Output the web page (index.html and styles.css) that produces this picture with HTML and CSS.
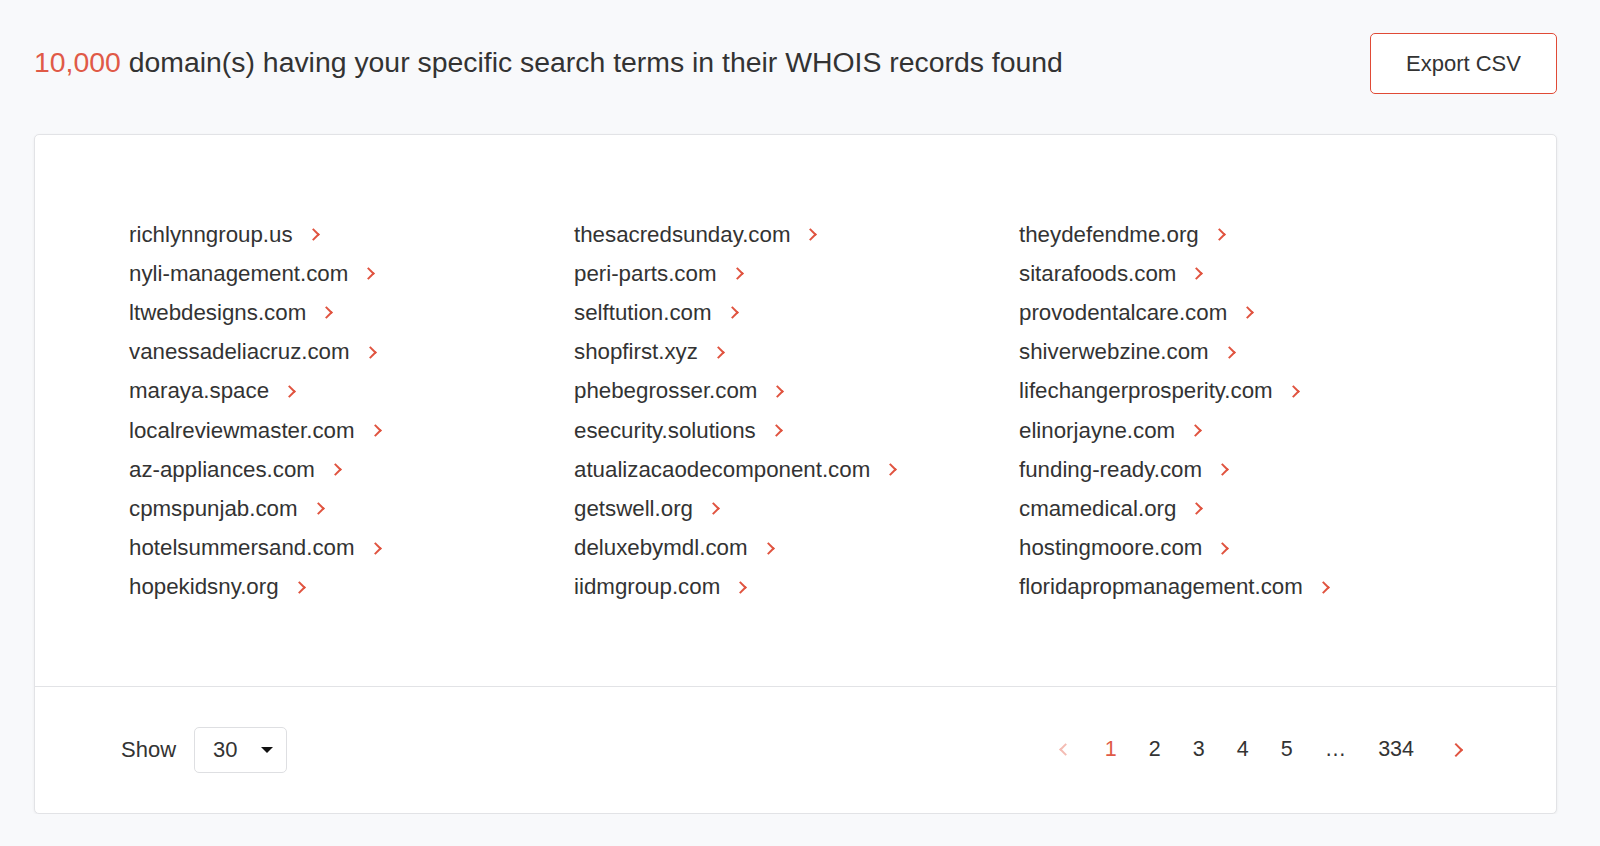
FILE: index.html
```html
<!DOCTYPE html>
<html lang="en">
<head>
<meta charset="utf-8">
<title>WHOIS search results</title>
<link rel="stylesheet" href="styles.css">
</head>
<body>
<div class="page">
  <header class="head">
    <h1 class="title"><span class="count">10,000</span> domain(s) having your specific search terms in their WHOIS records found</h1>
    <button class="export">Export CSV</button>
  </header>
  <section class="card">
    <div class="grid">
      <ul class="col">
        <li><a>richlynngroup.us</a><span class="chev"></span></li>
        <li><a>nyli-management.com</a><span class="chev"></span></li>
        <li><a>ltwebdesigns.com</a><span class="chev"></span></li>
        <li><a>vanessadeliacruz.com</a><span class="chev"></span></li>
        <li><a>maraya.space</a><span class="chev"></span></li>
        <li><a>localreviewmaster.com</a><span class="chev"></span></li>
        <li><a>az-appliances.com</a><span class="chev"></span></li>
        <li><a>cpmspunjab.com</a><span class="chev"></span></li>
        <li><a>hotelsummersand.com</a><span class="chev"></span></li>
        <li><a>hopekidsny.org</a><span class="chev"></span></li>
      </ul>
      <ul class="col">
        <li><a>thesacredsunday.com</a><span class="chev"></span></li>
        <li><a>peri-parts.com</a><span class="chev"></span></li>
        <li><a>selftution.com</a><span class="chev"></span></li>
        <li><a>shopfirst.xyz</a><span class="chev"></span></li>
        <li><a>phebegrosser.com</a><span class="chev"></span></li>
        <li><a>esecurity.solutions</a><span class="chev"></span></li>
        <li><a>atualizacaodecomponent.com</a><span class="chev"></span></li>
        <li><a>getswell.org</a><span class="chev"></span></li>
        <li><a>deluxebymdl.com</a><span class="chev"></span></li>
        <li><a>iidmgroup.com</a><span class="chev"></span></li>
      </ul>
      <ul class="col">
        <li><a>theydefendme.org</a><span class="chev"></span></li>
        <li><a>sitarafoods.com</a><span class="chev"></span></li>
        <li><a>provodentalcare.com</a><span class="chev"></span></li>
        <li><a>shiverwebzine.com</a><span class="chev"></span></li>
        <li><a>lifechangerprosperity.com</a><span class="chev"></span></li>
        <li><a>elinorjayne.com</a><span class="chev"></span></li>
        <li><a>funding-ready.com</a><span class="chev"></span></li>
        <li><a>cmamedical.org</a><span class="chev"></span></li>
        <li><a>hostingmoore.com</a><span class="chev"></span></li>
        <li><a>floridapropmanagement.com</a><span class="chev"></span></li>
      </ul>
    </div>
    <footer class="foot">
      <div class="show">
        <span class="show-label">Show</span>
        <div class="select"><span>30</span><span class="caret"></span></div>
      </div>
      <nav class="pager">
        <span class="pg arrow prev"><span class="chev-l"></span></span>
        <span class="pg active">1</span>
        <span class="pg">2</span>
        <span class="pg">3</span>
        <span class="pg">4</span>
        <span class="pg">5</span>
        <span class="pg">…</span>
        <span class="pg">334</span>
        <span class="pg arrow next"><span class="chev-r"></span></span>
      </nav>
    </footer>
  </section>
</div>
</body>
</html>
```

FILE: styles.css
```css
* { box-sizing: border-box; }
html, body { margin: 0; padding: 0; }
body {
  background: #f8f9fb;
  font-family: "Liberation Sans", Arial, Helvetica, sans-serif;
  color: #333;
}
.page {
  padding: 33px 43px 0 34px;
}
.head {
  display: flex;
  align-items: center;
  justify-content: space-between;
  height: 61px;
}
.title {
  margin: 0;
  font-weight: 400;
  font-size: 28.4px;
  color: #333;
  margin-top: -3px;
}
.count { color: #e05a47; }
.export {
  width: 187px;
  height: 61px;
  background: #fff;
  border: 1px solid #e04a36;
  border-radius: 5px;
  font-family: inherit;
  font-size: 22px;
  color: #333;
  padding: 0;
}
.card {
  margin-top: 40px;
  background: #fff;
  border: 1px solid #e2e3e6;
  border-radius: 5px;
  box-shadow: 0 1px 3px rgba(0,0,0,0.06);
}
.grid {
  display: grid;
  grid-template-columns: repeat(3, 445px);
  padding: 80px 0 79px 94px;
  border-bottom: 1px solid #e2e3e6;
}
.col {
  list-style: none;
  margin: 0;
  padding: 0;
}
.col li {
  display: flex;
  align-items: center;
  height: 39.2px;
  font-size: 22.3px;
  color: #333;
}
.chev {
  display: inline-block;
  width: 9px;
  height: 9px;
  border-top: 2px solid #e0533f;
  border-right: 2px solid #e0533f;
  transform: rotate(45deg);
  margin-left: 16px;
}
.foot {
  display: flex;
  align-items: center;
  justify-content: space-between;
  height: 126px;
  padding: 0 95px 0 86px;
}
.show {
  display: flex;
  align-items: center;
  font-size: 22px;
}
.show-label { margin-right: 18px; }
.select {
  display: flex;
  align-items: center;
  justify-content: space-between;
  width: 93px;
  height: 46px;
  border: 1px solid #dedfe2;
  border-radius: 5px;
  padding: 0 13px 0 18px;
  color: #333;
}
.caret {
  width: 0;
  height: 0;
  border-left: 6px solid transparent;
  border-right: 6px solid transparent;
  border-top: 6px solid #111;
}
.pager {
  display: flex;
  align-items: center;
  gap: 32px;
  font-size: 21.5px;
  color: #333;
}
.pg.active { color: #e05a47; }
.arrow {
  display: flex;
  align-items: center;
  height: 20px;
}
.prev { margin-right: 3px; }
.next { margin-left: 5px; }
.chev-l, .chev-r {
  display: inline-block;
  width: 10px;
  height: 10px;
  border-top: 2px solid #e0533f;
  transform: rotate(45deg);
}
.chev-r {
  border-right: 2px solid #e0533f;
}
.chev-l {
  border-top-color: #f4bcb3;
  border-left: 2px solid #f4bcb3;
  transform: rotate(-45deg);
  width: 9px;
  height: 9px;
}
```
